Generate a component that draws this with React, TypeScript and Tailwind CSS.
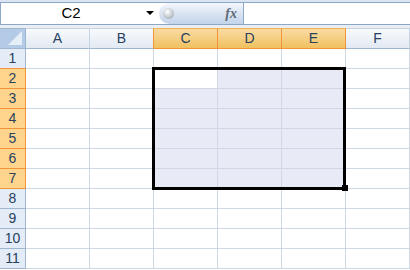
import React from 'react';

const COLS = ['A', 'B', 'C', 'D', 'E', 'F'];
const ROWS = [1, 2, 3, 4, 5, 6, 7, 8, 9, 10, 11];
const SEL_COLS = ['C', 'D', 'E'];
const isSelRow = (r: number) => r >= 2 && r <= 7;

const FormulaBar: React.FC = () => (
  <div className="flex flex-col">
    <div className="h-[2px] bg-[#dae5f3]" />
    <div className="flex h-[23px] border-y border-[#8ea7c6] bg-white">
      {/* Name box */}
      <div className="relative flex w-[159px] items-center border-l border-[#8ea7c6]">
        <span className="w-[140px] text-center text-[15px] text-black">C2</span>
        <span className="absolute left-[145px] top-[8px] h-0 w-0 border-x-[4px] border-t-[4px] border-x-transparent border-t-black" />
      </div>
      {/* Formula button */}
      <div className="flex w-[85px] items-center rounded-l-full border-r border-[#8ea7c6] bg-gradient-to-b from-[#f3f7fc] via-[#d9e4f2] to-[#c3d4ea] pl-[4px] pr-[6px]">
        <span className="h-[11px] w-[11px] rounded-full bg-[radial-gradient(circle_at_40%_35%,#ffffff,#b3bac3_70%,#8f98a3)]" />
        <span className="ml-auto font-['Liberation_Serif'] text-[14px] font-bold italic text-[#5f6b78]">fx</span>
      </div>
      <div className="flex-1 bg-white" />
    </div>
    <div className="h-[3px] bg-[#e9eef5]" />
  </div>
);

const Corner: React.FC = () => (
  <div className="flex items-end justify-end border-y border-r border-[#9eb6ce] bg-[#b4cbe8]">
    <svg width="16" height="16" viewBox="0 0 16 16" className="mb-[2px] mr-[2px]">
      <polygon points="15,1 15,15 1,15" fill="#e6eef8" />
    </svg>
  </div>
);

export default function App() {
  return (
    <div className="h-[270px] w-[410px] overflow-hidden bg-white font-['Liberation_Sans',sans-serif]">
      <FormulaBar />
      <div className="relative grid grid-cols-[26px_repeat(6,64px)] grid-rows-[21px_repeat(11,20px)]">
        <Corner />
        {COLS.map((c, i) => {
          const sel = SEL_COLS.includes(c);
          const nextSel = i + 1 < COLS.length && SEL_COLS.includes(COLS[i + 1]);
          return (
            <div
              key={c}
              className={`flex items-center justify-center border-y border-r text-[14px] text-[#27415f] ${
                sel
                  ? 'border-t-[#f3b24e] border-b-[#f29536] border-r-[#f29536] bg-gradient-to-b from-[#f9dba3] to-[#f1c15f]'
                  : `border-t-[#c5d3e3] border-b-[#9eb6ce] ${nextSel ? 'border-r-[#f29536]' : 'border-r-[#c5d3e3]'} bg-gradient-to-b from-[#f8fafd] to-[#e2e9f2]`
              }`}
            >
              {c}
            </div>
          );
        })}
        {ROWS.map((r) => {
          const sel = isSelRow(r);
          const nextSel = isSelRow(r + 1);
          return (
            <React.Fragment key={r}>
              <div
                className={`flex items-center justify-center border-b border-r text-[14px] text-[#27415f] ${
                  sel
                    ? 'border-[#f29536] bg-[#ffd58d]'
                    : `${nextSel ? 'border-b-[#f29536]' : 'border-b-[#9eb6ce]'} border-r-[#9eb6ce] bg-[#e4ecf7]`
                }`}
              >
                {r}
              </div>
              {COLS.map((c) => {
                const inSel = sel && SEL_COLS.includes(c);
                const active = r === 2 && c === 'C';
                return (
                  <div
                    key={c}
                    className={`border-b border-r border-[#d0d7e5] ${inSel && !active ? 'bg-[#e8eaf5]' : 'bg-white'}`}
                  />
                );
              })}
            </React.Fragment>
          );
        })}
        {/* selection outline + fill handle */}
        <div className="pointer-events-none absolute left-[152px] top-[39px] h-[123px] w-[194px] border-[3px] border-black" />
        <div className="pointer-events-none absolute left-[342px] top-[157px] h-[6px] w-[6px] bg-black" />
      </div>
    </div>
  );
}
